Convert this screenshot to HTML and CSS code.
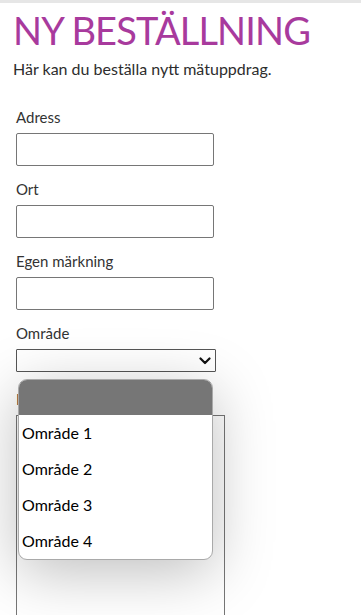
FILE: index.html
```html
<!DOCTYPE html>
<html lang="sv">
<head>
<meta charset="utf-8">
<title>Ny beställning</title>
<link rel="stylesheet" href="styles.css">
</head>
<body>
<div class="topbar"></div>
<main class="page">
  <h1 class="title">NY BESTÄLLNING</h1>
  <p class="intro">Här kan du beställa nytt mätuppdrag.</p>
  <form class="form">
    <div class="field">
      <label class="label">Adress</label>
      <input class="input" type="text">
    </div>
    <div class="field">
      <label class="label">Ort</label>
      <input class="input" type="text">
    </div>
    <div class="field">
      <label class="label">Egen märkning</label>
      <input class="input" type="text">
    </div>
    <div class="field field-select">
      <label class="label">Område</label>
      <div class="select">
        <svg class="chevron" width="12" height="8" viewBox="0 0 12 8"><polyline points="1.5,1.5 6,6 10.5,1.5" fill="none" stroke="#111" stroke-width="2.2" stroke-linecap="round" stroke-linejoin="round"/></svg>
      </div>
      <div class="popup">
        <div class="popup-head"></div>
        <div class="option">Område 1</div>
        <div class="option">Område 2</div>
        <div class="option">Område 3</div>
        <div class="option">Område 4</div>
      </div>
    </div>
    <div class="field field-comment">
      <label class="label">Kommentar</label>
      <textarea class="textarea"></textarea>
    </div>
  </form>
</main>
</body>
</html>
```

FILE: styles.css
```css
html, body {
  margin: 0;
  padding: 0;
  background: #fff;
}
body {
  font-family: Lato, "Open Sans", sans-serif;
  color: #333;
  overflow: hidden;
  height: 615px;
}
.topbar {
  height: 3px;
  background: #e6e6e6;
}
.page {
  padding: 0 13px;
}
.title {
  margin: 7px 0 0;
  font-size: 38px;
  line-height: 40px;
  font-weight: 400;
  color: #a83a9d;
  letter-spacing: -0.85px;
}
.intro {
  margin: 9px 0 0;
  font-size: 16px;
  line-height: 20px;
  color: #2d2d2d;
}
.form {
  padding: 29px 3px 0;
  display: flex;
  flex-direction: column;
  gap: 14px;
}
.field {
  display: flex;
  flex-direction: column;
  gap: 6px;
}
.field-select {
  position: relative;
}
.field-comment {
  margin-top: 4px;
}
.label {
  font-size: 15px;
  line-height: 19px;
  color: #333;
}
.input {
  box-sizing: border-box;
  width: 198px;
  height: 33px;
  margin: 0;
  border: 1px solid #767676;
  border-radius: 2px;
  background: #fff;
}
.select {
  box-sizing: border-box;
  width: 200px;
  height: 23px;
  border: 1px solid #555;
  border-radius: 1px;
  display: flex;
  align-items: center;
  justify-content: flex-end;
  padding-right: 4px;
  background: #fff;
}
.chevron {
  display: block;
}
.textarea {
  box-sizing: border-box;
  width: 209px;
  height: 230px;
  margin: 0;
  border: 1px solid #767676;
  border-radius: 0;
  resize: none;
}
.popup {
  position: absolute;
  left: 2px;
  top: 55px;
  width: 195px;
  box-sizing: border-box;
  border: 1.5px solid #a9a9a9;
  border-radius: 9px;
  background: #fff;
  overflow: hidden;
  box-shadow: 0 12px 60px rgba(0, 0, 0, 0.26);
  z-index: 5;
}
.popup-head {
  height: 35px;
  background: #767676;
}
.option {
  height: 36px;
  line-height: 36px;
  padding-left: 3px;
  font-size: 16px;
  color: #000;
}
```
